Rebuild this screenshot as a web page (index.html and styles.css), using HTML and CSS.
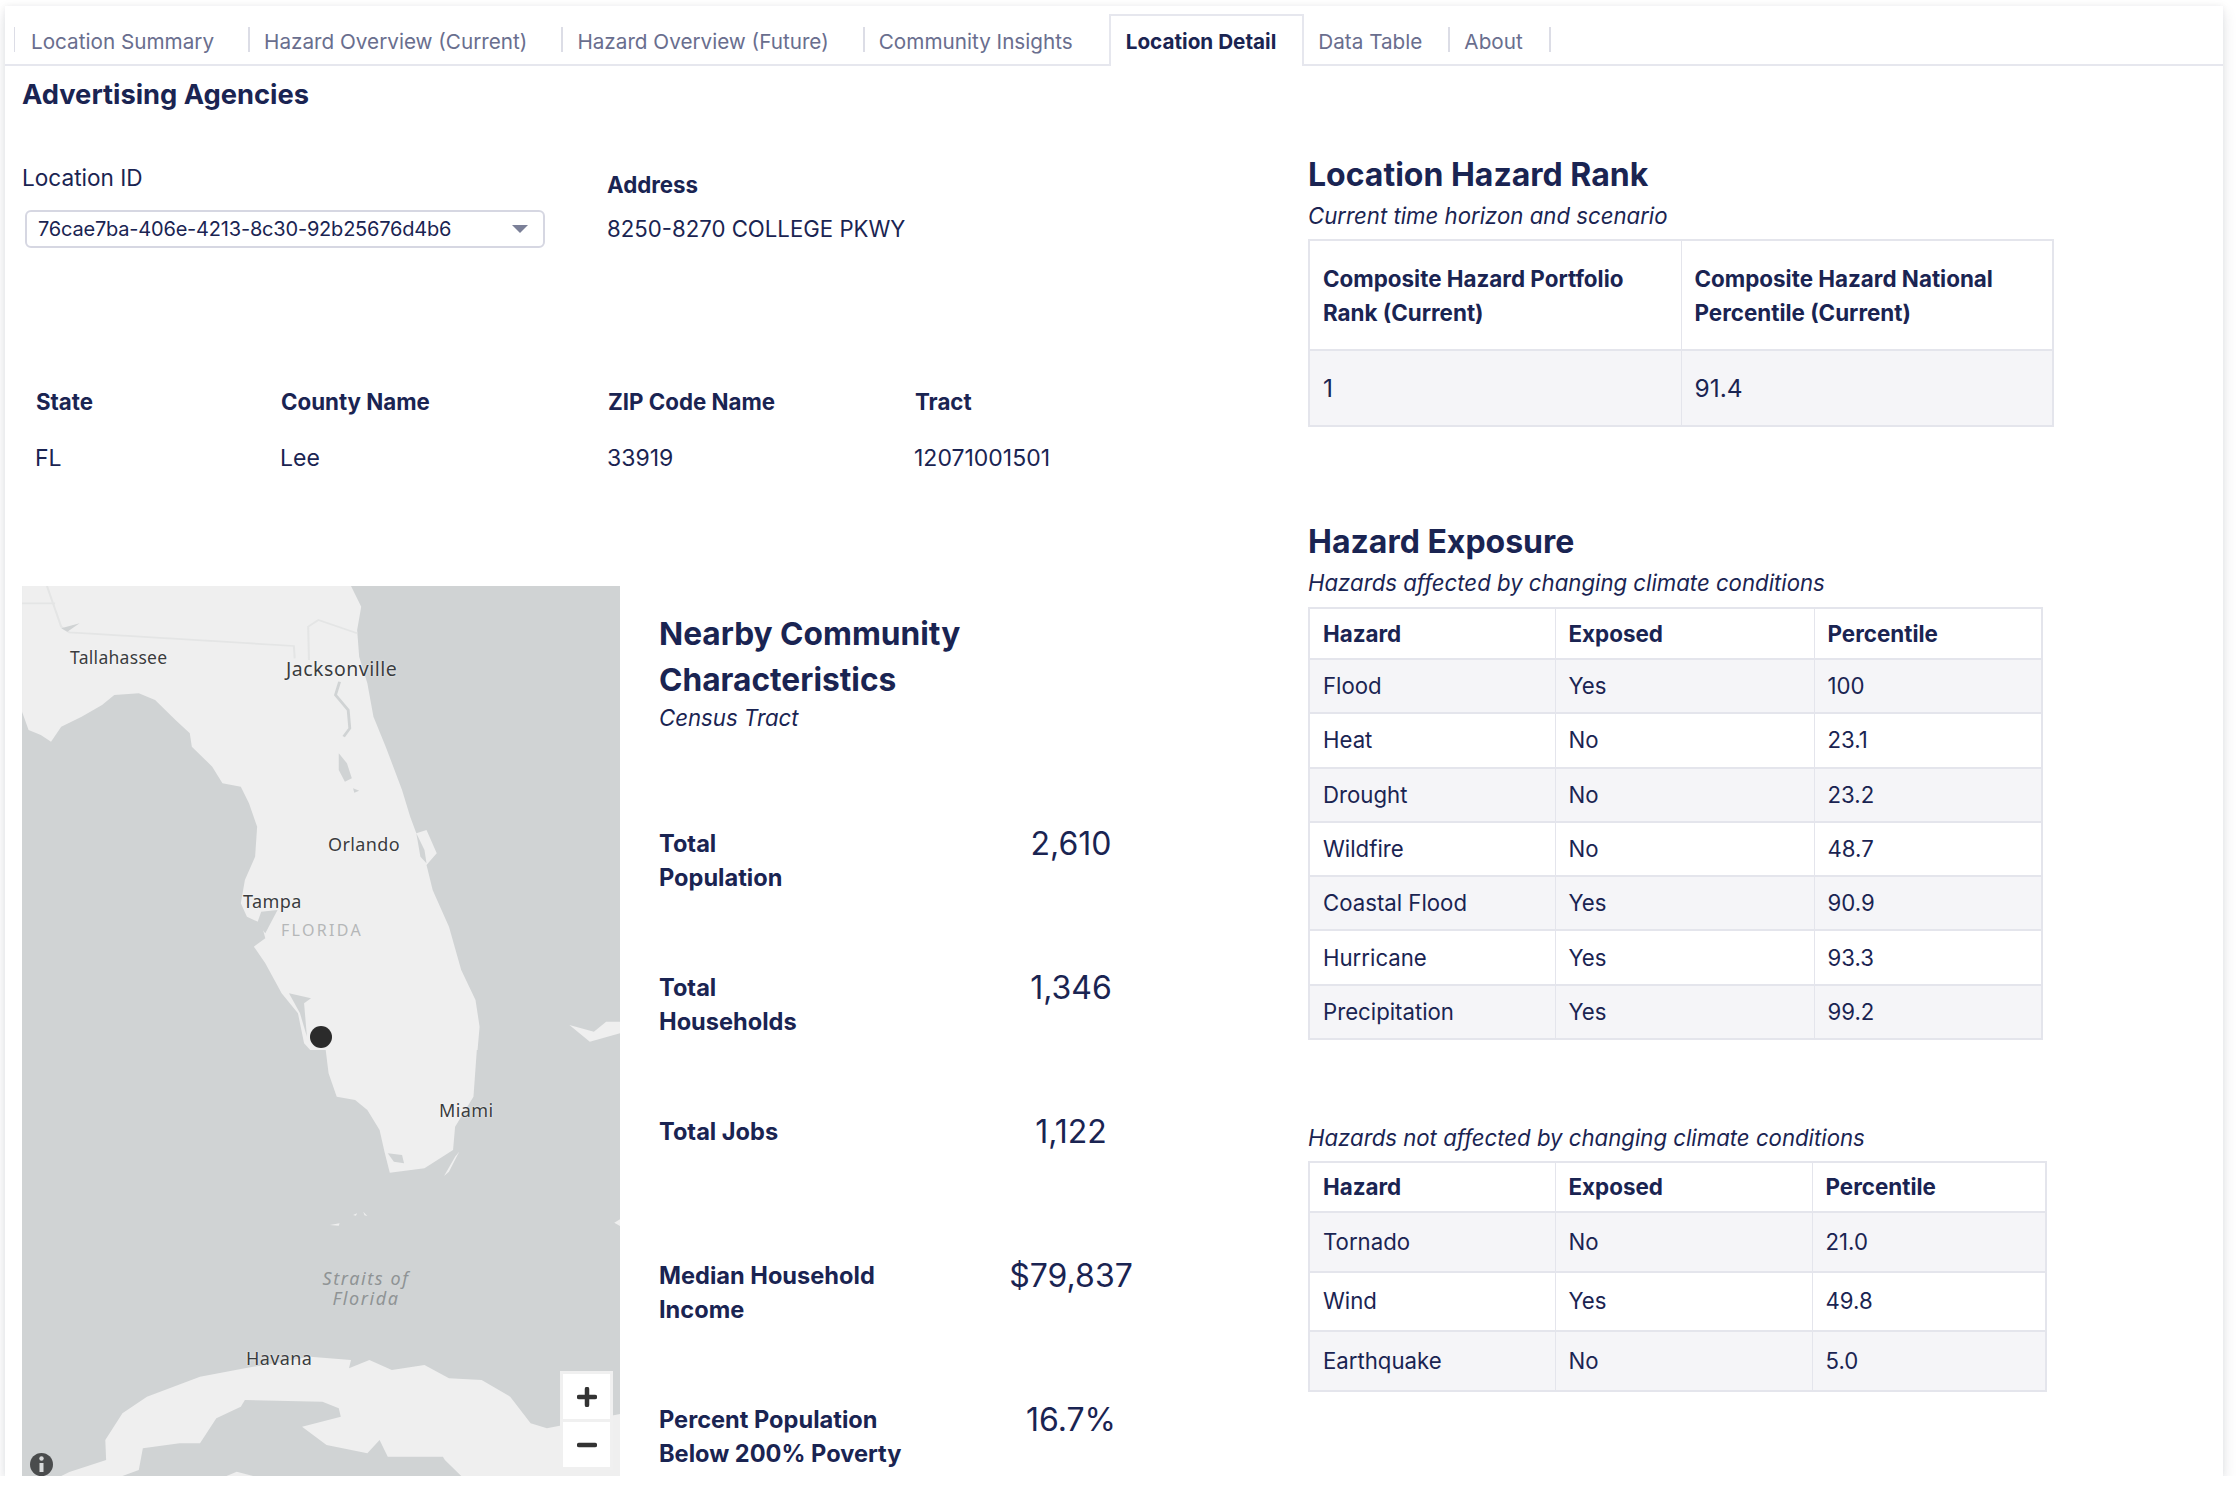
FILE: index.html
```html
<!DOCTYPE html>
<html lang="en">
<head>
<meta charset="utf-8">
<title>Location Detail</title>
<link rel="stylesheet" href="styles.css">
</head>
<body>
<div class="panel">
  <nav class="tabs">
    <a class="tab sep">Location Summary</a>
    <a class="tab sep">Hazard Overview (Current)</a>
    <a class="tab sep">Hazard Overview (Future)</a>
    <a class="tab">Community Insights</a>
    <a class="tab active">Location Detail</a>
    <a class="tab sep tight">Data Table</a>
    <a class="tab sep tight">About</a>
  </nav>
  <div class="content">
    <div class="left">
      <h1>Advertising Agencies</h1>
      <div class="id-row">
        <div class="id-field">
          <div class="id-label">Location ID</div>
          <div class="select"><span>76cae7ba-406e-4213-8c30-92b25676d4b6</span><i class="caret"></i></div>
        </div>
        <div class="addr-field">
          <div class="strong">Address</div>
          <div class="addr-value">8250-8270 COLLEGE PKWY</div>
        </div>
      </div>
      <div class="attrs">
        <div class="strong">State</div><div class="strong">County Name</div><div class="strong">ZIP Code Name</div><div class="strong">Tract</div>
        <div class="attr-val">FL</div><div class="attr-val">Lee</div><div class="attr-val">33919</div><div class="attr-val">12071001501</div>
      </div>
      <div class="map-row">
        <div class="map">
          <svg class="basemap" viewBox="22 586 598 890" preserveAspectRatio="none" aria-hidden="true">
            <rect x="22" y="586" width="598" height="890" fill="#d0d3d4"/>
            <g transform="translate(0,570) scale(.40816,.33333)">
              <path class="land" d="M54 48H860L885 110L875 180L880 260L900 340L915 440L945 530L985 660L1005 740L1020 790L1045 780L1070 850L1045 885L1060 960L1100 1070L1130 1200L1165 1290L1175 1370L1170 1440H760L745 1420L730 1330L690 1270L650 1180L622 1130L650 1105L640 1060L605 1040L590 1000L600 930L625 860L630 770L610 700L590 650L545 640L520 590L470 530L465 490L430 450L380 390L340 370L280 375L250 405L200 440L150 470L125 515L100 495L70 480L54 425Z"/>
              <path class="land" d="M1395 1365L1445 1415L1519 1390V1355L1485 1355L1455 1385Z"/>
              <path class="border" d="M115 48L150 170L170 187L720 228L722 265M54 100H135M757 270L755 170L780 150L875 190"/>
              <path class="river" d="M832 335L822 375L853 420L857 475L842 500"/>
              <path class="water" d="M150 175L195 160L165 185ZM830 550L850 580L862 625L845 635L830 600ZM865 655L880 662L868 668ZM1020 790L1040 840L1045 880L1030 860ZM708 1270L762 1285L745 1300L752 1400L735 1330ZM640 1025L680 1020L650 1090L630 1060Z"/>
            </g>
            <g transform="translate(0,1040) scale(.40816,.33333)">
              <path class="land" d="M795 0H1170L1160 170L1115 260L1110 330L1040 385L955 398L942 335L930 270L900 210L870 180L825 170L805 100Z"/>
              <path class="water" d="M950 340L985 345L990 370L965 365Z"/>
              <path class="land" d="M1125 335L1100 395L1088 408L1115 350ZM808 555L832 550L830 557ZM865 525L875 520L872 527ZM890 515L900 528L893 526ZM1519 538L1505 548L1519 558ZM150 1308L170 1296L260 1260L258 1200L300 1120L360 1070L490 1010L600 985L760 950L860 960L855 985L905 960L960 990L1040 975L1100 1015L1180 1020L1250 1070L1300 1150L1340 1165L1519 1122V1308H1130L1090 1260L1070 1220L1095 1250L950 1250L930 1200L900 1240L800 1215L740 1160L835 1130L830 1105L790 1085L600 1080L590 1100L530 1135L490 1210L440 1210L350 1225L340 1290L300 1308ZM555 1308L580 1295L620 1308Z"/>
            </g>
          </svg>
          <span class="city tallahassee">Tallahassee</span>
          <span class="city jacksonville">Jacksonville</span>
          <span class="city orlando">Orlando</span>
          <span class="city tampa">Tampa</span>
          <span class="state-label">FLORIDA</span>
          <span class="city miami">Miami</span>
          <span class="city havana">Havana</span>
          <span class="strait">Straits of<br>Florida</span>
          <span class="marker"></span>
          <div class="zoom-ctl">
            <button class="zoom-btn" type="button"><svg viewBox="0 0 20 20" width="20" height="20" aria-hidden="true"><path d="M10 2V18M2 10H18" stroke="#333" stroke-width="4.5" stroke-linecap="round"/></svg></button>
            <button class="zoom-btn" type="button"><svg viewBox="0 0 20 20" width="20" height="20" aria-hidden="true"><path d="M2 10H18" stroke="#333" stroke-width="4.5" stroke-linecap="round"/></svg></button>
          </div>
          <svg class="info" viewBox="0 0 23 23" aria-hidden="true"><circle cx="11.5" cy="11.5" r="11.5" fill="#4a4c4d"/><circle cx="11.5" cy="5.5" r="2.2" fill="#d8dadb"/><path d="M11.5 10V19" fill="none" stroke="#d8dadb" stroke-width="4"/></svg>
        </div>
        <div class="community">
          <h2 class="comm-title">Nearby Community Characteristics</h2>
          <div class="sub">Census Tract</div>
          <div class="stat stat-first"><div class="stat-label">Total<br>Population</div><div class="stat-val">2,610</div></div>
          <div class="stat"><div class="stat-label">Total<br>Households</div><div class="stat-val">1,346</div></div>
          <div class="stat"><div class="stat-label">Total Jobs</div><div class="stat-val">1,122</div></div>
          <div class="stat"><div class="stat-label">Median Household<br>Income</div><div class="stat-val">$79,837</div></div>
          <div class="stat"><div class="stat-label">Percent Population<br>Below 200% Poverty</div><div class="stat-val">16.7%</div></div>
        </div>
      </div>
    </div>
    <div class="right">
      <h2 class="sec rank-title">Location Hazard Rank</h2>
      <div class="sub">Current time horizon and scenario</div>
      <table class="grid rank">
        <thead><tr><th>Composite Hazard Portfolio Rank (Current)</th><th>Composite Hazard National Percentile (Current)</th></tr></thead>
        <tbody><tr><td>1</td><td>91.4</td></tr></tbody>
      </table>
      <h2 class="sec expo-title">Hazard Exposure</h2>
      <div class="sub">Hazards affected by changing climate conditions</div>
      <table class="grid expo">
        <thead><tr><th>Hazard</th><th>Exposed</th><th>Percentile</th></tr></thead>
        <tbody>
          <tr><td>Flood</td><td>Yes</td><td>100</td></tr>
          <tr><td>Heat</td><td>No</td><td>23.1</td></tr>
          <tr><td>Drought</td><td>No</td><td>23.2</td></tr>
          <tr><td>Wildfire</td><td>No</td><td>48.7</td></tr>
          <tr><td>Coastal Flood</td><td>Yes</td><td>90.9</td></tr>
          <tr><td>Hurricane</td><td>Yes</td><td>93.3</td></tr>
          <tr><td>Precipitation</td><td>Yes</td><td>99.2</td></tr>
        </tbody>
      </table>
      <div class="sub not-title">Hazards not affected by changing climate conditions</div>
      <table class="grid nonexpo">
        <thead><tr><th>Hazard</th><th>Exposed</th><th>Percentile</th></tr></thead>
        <tbody>
          <tr><td>Tornado</td><td>No</td><td>21.0</td></tr>
          <tr><td>Wind</td><td>Yes</td><td>49.8</td></tr>
          <tr><td>Earthquake</td><td>No</td><td>5.0</td></tr>
        </tbody>
      </table>
    </div>
  </div>
</div>
</body>
</html>
```
FILE: styles.css
```css
* { box-sizing: border-box; }
html, body { margin: 0; padding: 0; background: #fff; }
body { font-family: Inter, "Liberation Sans", sans-serif; color: #1a2452; font-size: 22.2px; line-height: 34px; padding: 6px 0 0 5px; }
.panel { width: 2218px; height: 1470px; background: #fff; box-shadow: 0 6px 14px rgba(20,25,50,.12), 0 0 6px rgba(20,25,50,.05); overflow: hidden; }

.tabs { display: flex; height: 60px; padding: 8px 0 0 9px; border-bottom: 2px solid #e6e7ee; align-items: stretch; }
.tab { position: relative; font-size: 20.7px; line-height: 24px; color: #696e8e; padding: 16px 36px 0 14px; height: 50px; }
.tab:first-child { padding-left: 17px; }
.tab.tight { padding-right: 28px; }
.tab.sep::after { content: ""; position: absolute; right: 0; top: 13px; height: 25px; width: 2px; background: #dcdde6; }
.tabs .tab:first-child::before { content: ""; position: absolute; left: 0; top: 13px; height: 25px; width: 1px; background: #dcdde6; }
.tab.active { color: #1a2452; font-weight: 700; background: #fff; height: 52px; border: 2px solid #e6e7ee; border-bottom: 0; padding: 14px 26px 0 15px; }

.content { display: grid; grid-template-columns: 1286px 1fr; padding-left: 17px; }
h1, h2 { margin: 0; font-weight: 700; }
h1 { font-size: 27.3px; line-height: 40px; margin-top: 9px; }
.strong { font-weight: 700; font-size: 22.3px; }
.sub { font-style: italic; line-height: 30px; }

.id-row { display: flex; margin-top: 48px; }
.id-field { width: 585px; }
.id-label { line-height: 30px; font-size: 22.6px; }
.select { width: 520px; height: 38px; margin: 17px 0 0 3px; border: 2px solid #d6d7e2; border-radius: 6px; display: flex; align-items: center; justify-content: space-between; padding: 0 15px 0 11px; font-size: 20px; line-height: 24px; letter-spacing: -.2px; }
.caret { width: 0; height: 0; border-left: 8px solid transparent; border-right: 8px solid transparent; border-top: 8px solid #7b8098; }
.addr-field { padding-top: 7px; }
.addr-field .strong { line-height: 30px; }
.addr-value { line-height: 30px; margin-top: 14px; }

.attrs { display: grid; grid-template-columns: 245px 327px 307px auto; grid-template-rows: 30px 30px; row-gap: 26px; margin-top: 139px; padding-left: 14px; line-height: 30px; }
.attr-val { font-size: 23px; margin-left: -1px; }

.map-row { display: flex; margin-top: 113px; }
.map { position: relative; width: 598px; height: 890px; flex: none; overflow: hidden; background: #d0d3d4; }
.basemap { display: block; width: 598px; height: 890px; }
.land { fill: #efefef; }
.water { fill: #d0d3d4; }
.border { fill: none; stroke: #e4e5e5; stroke-width: 5; }
.river { fill: none; stroke: #d0d3d4; stroke-width: 7; }
.city, .state-label, .strait { position: absolute; font-family: "Noto Sans", sans-serif; white-space: nowrap; line-height: 22px; }
.city { font-size: 18px; color: #3a3c3e; letter-spacing: .4px; text-shadow: 0 0 2px #fff; }
.tallahassee { left: 48px; top: 60px; font-size: 17.5px; letter-spacing: .3px; }
.jacksonville { left: 264px; top: 72px; font-size: 19.5px; letter-spacing: .5px; }
.orlando { left: 306px; top: 247px; }
.tampa { left: 221px; top: 304px; }
.miami { left: 417px; top: 513px; }
.havana { left: 224px; top: 761px; }
.state-label { left: 259px; top: 333px; font-size: 16px; letter-spacing: 2.3px; color: #b5b7b8; }
.strait { left: 344px; top: 682px; transform: translateX(-50%); font-size: 18px; font-style: italic; letter-spacing: 1.6px; line-height: 20px; text-align: center; color: #8f9395; }
.marker { position: absolute; left: 288px; top: 440px; width: 22px; height: 22px; border-radius: 50%; background: #2b2b2b; }
.zoom-ctl { position: absolute; left: 538px; top: 785px; width: 53px; padding: 3px; background: #f0f0f0; display: flex; flex-direction: column; gap: 3px; }
.zoom-btn { width: 47px; height: 45px; padding: 0; border: 0; background: #fff; display: flex; align-items: center; justify-content: center; }
.info { position: absolute; left: 8px; top: 867px; width: 23px; height: 23px; }

.community { margin-left: 39px; padding-top: 25px; width: 560px; }
.comm-title { font-size: 31.7px; line-height: 46px; width: 340px; }
.stat { display: grid; grid-template-columns: 290px 244px; height: 144px; }
.stat-first { margin-top: 94px; }
.stat-label { font-weight: 700; font-size: 23.6px; }
.stat-val { text-align: center; font-size: 32px; }

.sec { font-size: 32px; line-height: 44px; }
.rank-title { margin-top: 87px; }
.right .sub { height: 30px; margin-top: 4px; }
.grid { border-collapse: collapse; table-layout: fixed; margin-top: 8px; }
.grid, .grid th, .grid td { border: 2px solid #e4e5ec; }
.grid th, .grid td { border-left-width: 1px; border-right-width: 1px; text-align: left; padding: 0 0 0 13px; font-weight: 400; background: #fff; }
.grid th { font-weight: 700; font-size: 22.4px; }
.grid tbody tr:nth-child(odd) td { background: #f5f5f8; }
.rank { width: 743px; }
.rank th, .rank td { width: 372px; }
.rank th { padding-top: 2px; }
.rank td { font-size: 24.5px; }
.rank thead tr { height: 110px; }
.rank tbody tr { height: 76px; }
.expo-title { margin-top: 93px; }
.expo { width: 735px; margin-top: 9px; }
.expo th:nth-child(1) { width: 246px; }
.expo th:nth-child(2) { width: 259px; }
.expo thead tr { height: 51px; }
.expo tbody tr { height: 54.3px; }
.right .not-title { margin-top: 83px; }
.nonexpo { width: 739px; }
.nonexpo th:nth-child(1) { width: 246px; }
.nonexpo th:nth-child(2) { width: 257px; }
.nonexpo thead tr { height: 50px; }
.nonexpo tbody tr { height: 59.5px; }
```
